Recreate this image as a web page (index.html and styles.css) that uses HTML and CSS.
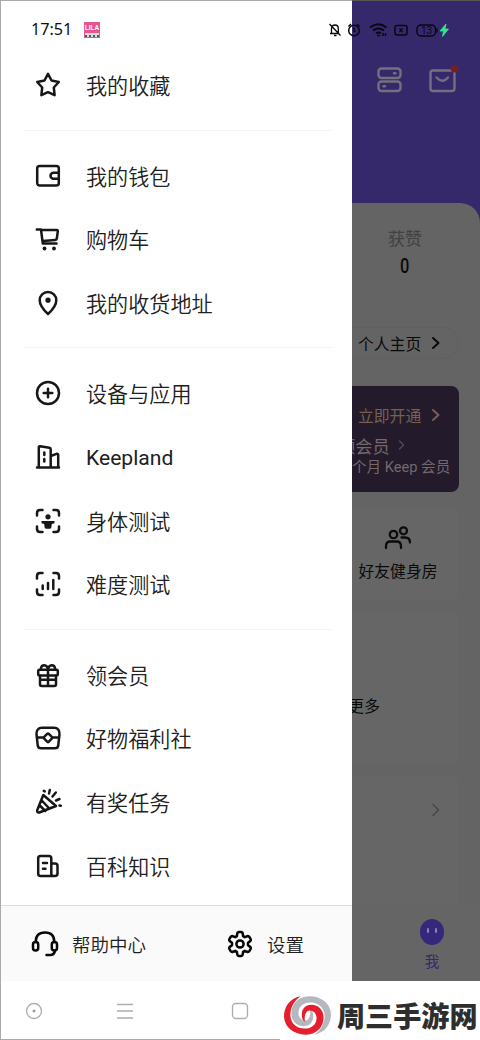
FILE: index.html
```html
<!DOCTYPE html>
<html lang="zh-CN">
<head>
<meta charset="utf-8">
<title>我的</title>
<link rel="stylesheet" href="styles.css">
</head>
<body>
<div class="phone">
  <div class="status">
    <span class="clock">17:51</span>
    <span class="app-badge"><b>LILA</b><i></i></span>
    <svg class="status-icons" width="124" height="18" viewBox="0 0 124 18" fill="none" stroke="#080810" stroke-width="1.5">
      <path d="M2 12.500h9.500M3.500 12V7.500Q3.700 4 7 4t3.300 3.500V12M6 14.500h2.500M1.500 3l11 11.500" stroke-width="1.300"/>
      <circle cx="26" cy="9.500" r="5.300"/><path d="M26 6.500v3.500l1.500 1M20.500 5.500l2.500-2.500M31.500 5.500L29 3"/>
      <path d="M42 6.500Q50 0 58.500 6.500M45 9.500Q50.500 5.500 56 9.500M48 12.300Q50.500 10.500 53 12.300" stroke-width="2"/><path d="M49 14.500h3M55 12v3M57.500 12v3"/>
      <rect x="67" y="4.500" width="12" height="9.500" rx="2"/><path d="M71.500 7.500l3 3.500M74.500 7.500l-3 3.500" stroke-width="1.200"/>
      <rect x="89" y="4" width="18.500" height="11" rx="4"/><path d="M109 7.500v4"/>
      <path d="M118 3l-6 7h3.500l-1 5.500 6-7.500H117z" fill="#35e58a" stroke="#35e58a" stroke-width=".8"/>
      <text x="93" y="13" class="battery">13</text>
    </svg>
  </div>

  <main class="drawer">
    <ul class="menu">
      <li class="item"><svg class="ico" viewBox="0 0 28 28"><path d="M14 2.900l3.500 6.600 7.300 1.500-5 5.500.8 7.700-6.600-3-6.600 3 .8-7.700-5-5.500 7.300-1.500z"/></svg><span>我的收藏</span></li>
      <li class="rule"></li>
      <li class="item"><svg class="ico" viewBox="0 0 28 28"><rect x="3.200" y="4" width="21.600" height="19.500" rx="2.500"/><path d="M24.800 10.800H19.500a3 3 0 0 0 0 6h5.300"/></svg><span>我的钱包</span></li>
      <li class="item"><svg class="ico" viewBox="0 0 28 28"><path d="M2.800 4.600H7l1.800 14H22.500M7.300 5h15.500q1.200 0 1 1.500l-1 7q-.2 1.300-1.500 1.400L8.800 16"/><circle class="dot" cx="10.500" cy="23.500" r="1.900"/><circle class="dot" cx="20" cy="23.500" r="1.900"/></svg><span>购物车</span></li>
      <li class="item"><svg class="ico" viewBox="0 0 28 28"><path d="M14 25C9 20.500 5.700 16.500 5.700 11.300a8.300 8.300 0 0 1 16.600 0c0 5.200-3.300 9.200-8.300 13.700z"/><circle class="dot" cx="14" cy="11.200" r="2.600"/></svg><span>我的收货地址</span></li>
      <li class="rule"></li>
      <li class="item"><svg class="ico" viewBox="0 0 28 28"><circle cx="14" cy="14" r="11"/><path d="M14 9.700v8.600M9.700 14h8.600"/></svg><span>设备与应用</span></li>
      <li class="item"><svg class="ico" viewBox="0 0 28 28"><path d="M3 24.500h22M4.800 24V4.500q0-1.400 1.300-1.200l9.200 1.400q1.400.2 1.400 1.500V24M16.700 13l5.800-2.200q1.700-.3 1.700 1.200v12"/><path d="M10.300 9.500v2.500M10.300 16v2.500"/></svg><span class="latin">Keepland</span></li>
      <li class="item"><svg class="ico" viewBox="0 0 28 28"><path d="M3 8.500V6q0-3 3-3h2.500M19.500 3H22q3 0 3 3v2.500M25 19.500V22q0 3-3 3h-2.500M8.500 25H6q-3 0-3-3v-2.500"/><circle class="dot" cx="14" cy="9.800" r="2.600"/><path class="dot" d="M7.500 14h13v2.300l-2.700.7-.6 4.300q-3.200 1-6.400 0L10.200 17l-2.700-.7z"/></svg><span>身体测试</span></li>
      <li class="item"><svg class="ico" viewBox="0 0 28 28"><path d="M3 8.500V6q0-3 3-3h2.500M19.500 3H22q3 0 3 3v2.500M25 19.500V22q0 3-3 3h-2.500M8.500 25H6q-3 0-3-3v-2.500M8.700 15.500v3.500M14 13v6M19.300 10v9"/></svg><span>难度测试</span></li>
      <li class="rule"></li>
      <li class="item"><svg class="ico" viewBox="0 0 28 28"><g transform="translate(0 .8)"><rect x="4.200" y="8" width="19.600" height="5.600" rx="1.500"/><path d="M6 14v8.500q0 1.700 1.700 1.700h12.600q1.700 0 1.700-1.700V14M14 8v16M6.800 7.500Q7 3.400 10.300 3.400 13.500 3.500 14 8 14.500 3.500 17.700 3.400q3.300 0 3.500 4.100M6.500 18h15"/></g></svg><span>领会员</span></li>
      <li class="item"><svg class="ico" viewBox="0 0 28 28"><path d="M8 3.700h12c4 0 5.800 3 5.500 6.500l-1.200 11q-.2 3-3.300 3H7q-3.100 0-3.300-3l-1.200-11C2.200 6.700 4 3.700 8 3.700zM2.700 13.500h6.500M18.800 13.500h6.500"/><rect x="10.700" y="10.400" width="6.600" height="6.600" rx="1.200" transform="rotate(45 14 13.700)"/></svg><span>好物福利社</span></li>
      <li class="item"><svg class="ico" viewBox="0 0 28 28"><path d="M9.300 7L3.300 22q-.8 2.700 2 2.500L22 18zM7.300 12l8 8.500M5.300 17l6 6M15 5.500l.8-3.500M18.500 8.500l3.300-4M22 12.500l3.500-1.500M9.800 2.900l1 .5M25.500 17.500l1.300.2"/></svg><span>有奖任务</span></li>
      <li class="item"><svg class="ico" viewBox="0 0 28 28"><path d="M19 24H6.500q-2.300 0-2.300-2.500V6.500Q4.200 4 6.500 4H15q2.300 0 2.300 2.500V22q0 2 2.500 2h1q2.700 0 2.700-2.500V14q0-2.500-2.500-2.500h-3.500M9 11h4M9 16.700h2.500"/></svg><span>百科知识</span></li>
    </ul>
    <footer class="tools">
      <div class="tool help"><svg class="ico" viewBox="0 0 28 28"><rect x="2" y="12" width="5.200" height="8.500" rx="2.500"/><rect x="20.800" y="12" width="5.200" height="8.500" rx="2.500"/><path d="M4.700 12C4.700 5.500 8.500 2.500 14 2.500s9.300 3 9.300 9.500M24 20.500q-.5 4.500-5 4.500h-3.500"/></svg><span>帮助中心</span></div>
      <div class="tool"><svg class="ico" viewBox="0 0 28 28"><path d="M11.200 4Q11.400 2 13 2h2q1.600 0 1.800 2l.3 2.200 1.700 1 2.100-.9q1.700-.6 2.600.8l1 1.800q.8 1.400-.6 2.500L22 12.700v2.600l1.900 1.300q1.400 1.100.6 2.500l-1 1.800q-.9 1.400-2.600.8l-2.100-.9-1.700 1-.3 2.200q-.2 2-1.800 2h-2q-1.600 0-1.800-2l-.3-2.200-1.700-1-2.100.9q-1.700.6-2.600-.8l-1-1.800q-.8-1.400.6-2.500L6 15.300v-2.600l-1.900-1.300q-1.400-1.100-.6-2.500l1-1.800q.9-1.400 2.600-.8l2.100.9 1.700-1z"/><circle cx="14" cy="14" r="3.600"/></svg><span>设置</span></div>
    </footer>
  </main>

  <section class="page">
    <header class="hero">
      <svg width="26" height="28" viewBox="0 0 26 28"><rect x="1.500" y="2.500" width="22" height="9.500" rx="3"/><rect x="1.500" y="15.500" width="22" height="9.500" rx="3"/><path d="M17 7.300h1.500M6.500 20.300h1.500"/></svg>
      <svg width="30" height="28" viewBox="0 0 30 28"><rect x="1.500" y="4.500" width="24" height="20.500" rx="2.500"/><path d="M7.500 11.500q6 6.500 11.500 0"/><circle class="alert" cx="25.500" cy="2.800" r="3.800"/></svg>
    </header>
    <div class="sheet">
      <div class="stat"><span>获赞</span><b>0</b></div>
      <div class="profile"><span>个人主页</span><svg width="10" height="14" viewBox="0 0 10 14"><path d="M2 2l5.500 5L2 12"/></svg></div>
      <div class="vip">
        <div class="vip-open"><span>立即开通</span><svg width="10" height="14" viewBox="0 0 10 14"><path d="M2 2l5.500 5L2 12"/></svg></div>
        <div class="vip-name"><span>领会员</span><svg width="8" height="12" viewBox="0 0 8 12"><path d="M1.500 2l4 4-4 4"/></svg></div>
        <div class="vip-note">个月 Keep 会员</div>
      </div>
      <div class="card room"><svg width="28" height="24" viewBox="0 0 28 24"><circle cx="9.500" cy="8.500" r="3.700"/><circle cx="19.500" cy="4.800" r="3.500"/><path d="M2 22v-2q0-4.500 4.500-4.500h6q4.500 0 4.500 4.500v2M17.500 11.500h3.500q5 0 5 5"/></svg><span>好友健身房</span></div>
      <div class="card more"><span>更多</span></div>
      <div class="card next"><svg width="9" height="14" viewBox="0 0 9 14"><path d="M2 1.500L7.500 7 2 12.500"/></svg></div>
      <div class="tab"><i class="face"></i><span>我</span></div>
    </div>
  </section>

  <nav class="nav">
    <div class="keys">
      <svg width="18" height="18" viewBox="0 0 18 18"><circle cx="9" cy="9" r="7.500"/><circle cx="9" cy="9" r="1.500" class="core"/></svg>
      <svg width="18" height="18" viewBox="0 0 18 18"><path d="M1 2.500h16M1 9h16M1 16h16"/></svg>
      <svg width="18" height="18" viewBox="0 0 18 18"><rect x="1.500" y="1.500" width="15" height="15" rx="3.500"/></svg>
    </div>
    <div class="brand">
      <svg width="47" height="39" viewBox="0 0 140 116">
        <defs><path id="arm" d="M50 1C15 7 0 35 0 62c2 34 32 54 66 53 32-1 52-23 52-51 0-22-16-38-36-38-18 0-29 12-29 29 0 11 3 18 9 22-2-18 3-34 14-34 12 0 21 9 21 23 0 18-15 31-35 31-26 0-43-17-43-41C19 34 31 13 50 1z"/></defs>
        <use href="#arm" fill="#b5b8bd" transform="rotate(180 70 58)"/>
        <use href="#arm" fill="#e61f2d"/>
      </svg>
      <strong>周三手游网</strong>
    </div>
  </nav>
</div>
</body>
</html>
```

FILE: styles.css
```css
* { box-sizing: border-box; }
body { margin: 0; background: #fff; }
.phone {
  position: relative;
  display: grid;
  grid-template: 981px 59px / 352px 128px;
  width: 480px;
  height: 1040px;
  overflow: hidden;
  color: #202020;
  font-family: Roboto, "Noto Sans CJK SC", sans-serif;
}
svg { display: block; flex: none; overflow: visible; }

.status {
  position: absolute;
  z-index: 2;
  inset: 20px 0 auto 0;
  display: flex;
  align-items: center;
  height: 19px;
  padding-left: 31px;
}
.clock { width: 53px; font: 16.2px/19px "Noto Sans", sans-serif; color: #111; }
.app-badge { width: 16px; height: 16px; background: #e8548f; text-align: center; }
.app-badge b { display: block; height: 11px; font: bold 6.5px/12px "Liberation Sans", sans-serif; color: #fff; }
.app-badge i { display: block; height: 4px; margin: 0 1px; background: #ddd; border-bottom: 2px dotted #555; }
.status-icons { margin-left: 228px; }
.battery { font: 10px Roboto, sans-serif; fill: #080810; stroke: none; }

.drawer {
  display: flex;
  flex-direction: column;
  border: solid #aaa;
  border-width: 1px 0 0 1px;
  background: #fff;
}
.menu { flex: 1; margin: 0; padding: 53px 0 0; list-style: none; }
.item {
  display: flex;
  align-items: center;
  gap: 24px;
  height: 63.6px;
  padding-left: 33px;
  font-size: 21.1px;
  line-height: 30px;
}
.item svg { margin-top: -1px; }
.item span { padding-top: 3px; font-weight: 350; }
.item .latin { padding-top: 1px; font-weight: 400; }
.rule { height: 26.9px; padding: 12px 20px 0 22px; }
.rule::after { content: ""; display: block; height: 1px; background: #f4f4f4; }
.ico {
  width: 28px;
  height: 28px;
  fill: none;
  stroke: #171717;
  stroke-width: 2.5;
  stroke-linecap: round;
  stroke-linejoin: round;
}
.dot { fill: #171717; stroke: none; }
.tools {
  display: flex;
  align-items: center;
  height: 76px;
  padding-left: 30px;
  border-top: 1px solid #dcdcdc;
  background: #fafafa;
  font-size: 18.5px;
  font-weight: 350;
}
.tool { display: flex; align-items: center; gap: 13px; }
.help { width: 195px; }
.tools .ico { stroke: #080808; }

.page {
  display: flex;
  flex-direction: column;
  min-width: 0;
  overflow: hidden;
  border-top: 1px solid #555;
  background: #35296b;
  fill: none;
  stroke-linecap: round;
  stroke-linejoin: round;
}
.hero {
  display: flex;
  gap: 26px;
  height: 202px;
  padding: 65px 0 0 25px;
  stroke: #74707f;
  stroke-width: 2.4;
}
.alert { fill: #73201f; stroke: none; }
.sheet {
  display: flex;
  flex: 1;
  flex-direction: column;
  border-radius: 0 20px 0 0;
  background: #646464;
  color: #0a0a0a;
}
.stat {
  display: flex;
  flex-direction: column;
  align-items: center;
  height: 124px;
  padding: 24px 22px 0 0;
}
.stat span { font-size: 17px; line-height: 24px; color: #414141; }
.stat b { font-size: 20px; line-height: 31px; font-weight: 500; transform: scaleX(.82); }
.profile {
  display: flex;
  align-items: center;
  width: 107px;
  height: 32px;
  padding-left: 6px;
  border: solid #606060;
  border-width: 1px 1px 1px 0;
  border-radius: 0 16px 16px 0;
  gap: 9px;
  font-size: 15.8px;
  stroke: #0a0a0a;
  stroke-width: 2;
}
.profile span, .vip-open span { width: 64px; white-space: nowrap; }
.vip {
  width: 107px;
  height: 106px;
  margin-top: 27px;
  padding-top: 17px;
  border-radius: 0 8px 8px 0;
  background: #231a2b;
  overflow: hidden;
  white-space: nowrap;
}
.vip-open {
  display: flex;
  align-items: center;
  gap: 9px;
  height: 24px;
  padding-left: 6px;
  font-size: 15.8px;
  color: #766052;
  stroke: #766052;
  stroke-width: 2;
}
.vip-name {
  display: flex;
  align-items: center;
  gap: 8px;
  height: 36px;
  margin-left: -14px;
  font-size: 17.2px;
  color: #75686b;
  stroke: #564a54;
  stroke-width: 1.3;
}
.vip-note { font-size: 14.6px; line-height: 9px; color: #75686b; }
.card { width: 107px; border-radius: 0 8px 8px 0; background: #666; }
.room {
  display: flex;
  flex-direction: column;
  align-items: center;
  height: 93px;
  margin-top: 16px;
  padding: 18px 15px 0 0;
  font-size: 15.8px;
  line-height: 24px;
  white-space: nowrap;
  stroke: #0c0c0c;
  stroke-width: 2.3;
}
.room span { margin-top: 10px; stroke: none; }
.more {
  height: 153px;
  margin-top: 10px;
  padding-top: 84px;
  overflow: hidden;
  font-size: 16px;
  line-height: 24px;
}
.more span { display: block; margin-left: -4px; }
.next {
  display: flex;
  justify-content: flex-end;
  height: 130px;
  margin-top: 12px;
  padding: 27px 19px 0 0;
  stroke: #484848;
  stroke-width: 1.6;
}
.tab {
  display: flex;
  flex: 1;
  flex-direction: column;
  align-items: center;
  padding: 13px 0 0 32px;
  background: #656565;
  color: #34276e;
  font-size: 14.5px;
  line-height: 22px;
}
.face {
  display: flex;
  justify-content: center;
  gap: 6px;
  width: 24px;
  height: 26px;
  margin-bottom: 7px;
  padding-top: 9px;
  border-radius: 50%;
  background: #35277c;
}
.face::before, .face::after { content: ""; width: 2px; height: 5px; border-radius: 1px; background: #8b86a8; }

.nav { display: flex; grid-column: 1 / 3; background: #fff; }
.keys {
  display: flex;
  gap: 73px;
  width: 280px;
  padding: 21px 0 0 24px;
  border: solid #aaa;
  border-width: 0 0 1px 1px;
  fill: none;
  stroke: #adadad;
  stroke-width: 1.3;
}
.keys svg:last-child { margin-left: 24px; }
.core { fill: #999; stroke: none; }
.brand { display: flex; align-items: center; width: 200px; padding: 9px 0 0 4px; gap: 6px; }
.brand strong { font: 900 28.1px/40px "Noto Sans CJK SC", sans-serif; color: #2e2e2e; white-space: nowrap; }
```
